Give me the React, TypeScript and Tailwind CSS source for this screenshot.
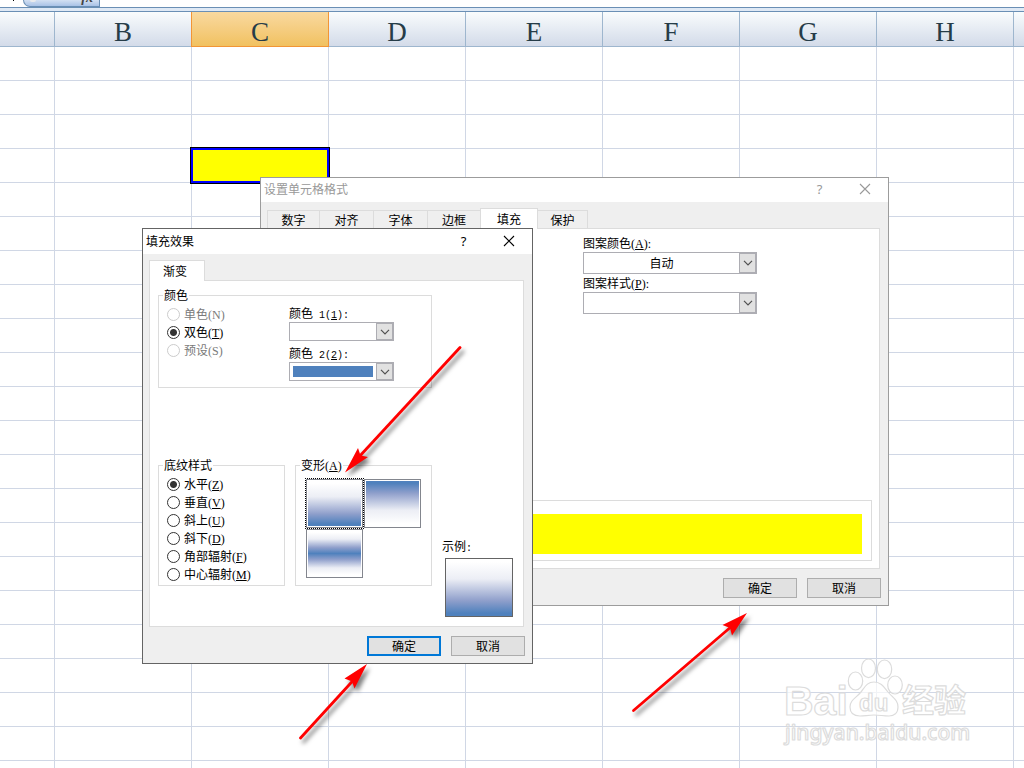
import type { ReactNode } from "react";

const columns = ["B", "C", "D", "E", "F", "G", "H"];
const rows = Array.from({ length: 22 }, (_, i) => i + 1);

function Key({ k, colon, plain }: { k: string; colon?: boolean; plain?: boolean }) {
  const isDigit = /\d/.test(k);
  return (
    <span
      className={isDigit ? "font-['Liberation_Mono',monospace] text-[10px]" : "font-['Liberation_Serif',serif] text-[12px]"}
    >
      (<span className={plain ? "" : "underline underline-offset-1"}>{k}</span>){colon ? ":" : ""}
    </span>
  );
}

function Chevron() {
  return (
    <svg viewBox="0 0 10 6" className="h-1.5 w-2.5" fill="none" stroke="#505050" strokeWidth="1.2">
      <path d="M1 .8 5 4.8 9 .8" />
    </svg>
  );
}

function Combo({
  id,
  options,
  small,
  swatch,
}: {
  id: string;
  options: string[];
  small?: boolean;
  swatch?: boolean;
}) {
  return (
    <div
      className={`relative flex border border-[#adadb3] bg-white ${small ? "h-[19px] w-[105px]" : "h-[22px] w-[174px]"}`}
    >
      <div className={`flex min-w-0 flex-1 ${swatch ? "p-[3px]" : ""}`}>
        <select
          id={id}
          className={`w-full appearance-none text-center text-[12px] leading-4 [text-align-last:center] ${swatch ? "bg-[#4f81bd]" : "bg-white"}`}
        >
          {options.map((o) => (
            <option key={o}>{o}</option>
          ))}
        </select>
      </div>
      <span className="pointer-events-none flex w-[17px] items-center justify-center border border-[#adadb3] bg-[#e1e1e1]">
        <Chevron />
      </span>
    </div>
  );
}

function Radio({
  name,
  label,
  k,
  checked,
  disabled,
}: {
  name: string;
  label: string;
  k: string;
  checked?: boolean;
  disabled?: boolean;
}) {
  return (
    <label className={`flex h-[18px] items-center gap-1 leading-4 whitespace-nowrap ${disabled ? "text-[#7a7a7a]" : "text-black"}`}>
      <input
        type="radio"
        name={name}
        defaultChecked={checked}
        disabled={disabled}
        className="size-[13px] shrink-0 appearance-none rounded-full border border-[#333] bg-white checked:bg-[radial-gradient(circle,#333_0_3px,#fff_4px)] disabled:border-[#ccc]"
      />
      <span>
        {label}
        <Key k={k} plain={disabled} />
      </span>
    </label>
  );
}

function TitleBar({ title, dim }: { title: string; dim?: boolean }) {
  return (
    <div
      className={`flex items-center bg-white pb-0.5 pl-[3px] ${dim ? "h-6 text-[#999]" : "h-[25px] text-black"}`}
    >
      <h2 className="flex-1 text-[12px] leading-4">{title}</h2>
      <button aria-label="帮助" className="w-[45px] font-['Noto_Sans',sans-serif] text-[13px] leading-4">
        ?
      </button>
      <button aria-label="关闭" className="flex w-[46px] justify-center">
        <svg viewBox="0 0 12 12" className="size-3" stroke="currentColor" strokeWidth="1.1">
          <path d="M1 1 11 11M11 1 1 11" />
        </svg>
      </button>
    </div>
  );
}

function PushButton({ children, primary }: { children: ReactNode; primary?: boolean }) {
  return (
    <button
      className={`flex h-5 w-[74px] items-center justify-center bg-[#e1e1e1] leading-4 ${primary ? "border-2 border-[#0078d7]" : "border border-[#adadad]"}`}
    >
      {children}
    </button>
  );
}

const formatTabs = [
  { label: "数字", look: "h-[18px] w-[53px] border border-b-0" },
  { label: "对齐", look: "h-[18px] w-[54px] border-t border-r" },
  { label: "字体", look: "h-[18px] w-[54px] border-t border-r" },
  { label: "边框", look: "h-[18px] w-[52px] border-t" },
  { label: "填充", look: "relative -mb-px h-[21px] w-[58px] border border-b-0 bg-white", active: true },
  { label: "保护", look: "h-[18px] w-[50px] border-t border-r" },
];

function FormatDialog() {
  return (
    <section className="absolute top-[177px] left-[260px] flex h-[429px] w-[629px] flex-col border border-[#9c9c9c] bg-[#efefef]">
      <TitleBar title="设置单元格格式" dim />
      <div role="tablist" className="flex items-end pt-[6px] pl-1.5">
        {formatTabs.map((t) => (
          <button
            key={t.label}
            role="tab"
            aria-selected={!!t.active}
            className={`border-[#dcdcdc] leading-4 ${t.look}`}
          >
            {t.label}
          </button>
        ))}
      </div>
      <div className="mr-2 ml-1.5 flex flex-1 flex-col justify-between border border-[#dcdcdc] bg-white px-[7px] pb-[7px]">
        <div className="flex flex-col pt-[5px] pl-[308px]">
          <label htmlFor="pattern-color" className="h-[18px] leading-[18px]">
            图案颜色
            <Key k="A" colon />
          </label>
          <Combo id="pattern-color" options={["自动"]} />
          <label htmlFor="pattern-style" className="h-[18px] leading-[18px]">
            图案样式
            <Key k="P" colon />
          </label>
          <Combo id="pattern-style" options={[""]} />
        </div>
        <div className="border border-[#dcdcdc] px-[9px] pt-[13px] pb-1.5">
          <div className="h-10 bg-[#ff0]" />
        </div>
      </div>
      <div className="flex justify-end gap-2.5 px-[7px] pt-[9px] pb-[7px]">
        <PushButton>确定</PushButton>
        <PushButton>取消</PushButton>
      </div>
    </section>
  );
}

const tile = "h-[49px] w-[57px] border border-[#83868e] bg-white p-px";

function FillEffectsDialog() {
  return (
    <section className="absolute top-[228px] left-[142px] flex h-[436px] w-[391px] flex-col border border-[#646464] bg-[#efefef]">
      <TitleBar title="填充效果" />
      <div role="tablist" className="flex pt-1.5 pl-1.5">
        <button
          role="tab"
          aria-selected="true"
          className="relative -mb-px h-[21px] w-14 border border-b-0 border-[#dcdcdc] bg-white pr-1 leading-4"
        >
          渐变
        </button>
      </div>
      <div className="mr-2 ml-1.5 flex-1 border border-[#dcdcdc] bg-white px-2 pt-1.5">
        <fieldset className="h-[101px] w-[274px] border border-[#dcdcdc] pl-2">
          <legend className="-ml-1 h-4 bg-white px-px leading-4">颜色</legend>
          <div className="flex">
            <div className="w-[122px] pt-0.5">
              <Radio name="mode" label="单色" k="N" disabled />
              <Radio name="mode" label="双色" k="T" checked />
              <Radio name="mode" label="预设" k="S" disabled />
            </div>
            <div className="flex flex-col gap-[3px] pt-px">
              <div>
                <label htmlFor="color-1" className="block h-[18px] leading-[18px]">
                  颜色<span className="font-['Liberation_Mono',monospace] text-[10px]"> 1</span>
                  <Key k="1" colon />
                </label>
                <Combo id="color-1" options={[""]} small />
              </div>
              <div>
                <label htmlFor="color-2" className="block h-[18px] leading-[18px]">
                  颜色<span className="font-['Liberation_Mono',monospace] text-[10px]"> 2</span>
                  <Key k="2" colon />
                </label>
                <Combo id="color-2" options={[""]} small swatch />
              </div>
            </div>
          </div>
        </fieldset>
        <div className="mt-[69px] flex">
          <fieldset className="h-[129px] w-[127px] border border-[#dcdcdc] pl-2">
            <legend className="-ml-1 h-4 bg-white px-px leading-4">底纹样式</legend>
            <div className="pt-0.5">
              <Radio name="shade" label="水平" k="Z" checked />
              <Radio name="shade" label="垂直" k="V" />
              <Radio name="shade" label="斜上" k="U" />
              <Radio name="shade" label="斜下" k="D" />
              <Radio name="shade" label="角部辐射" k="F" />
              <Radio name="shade" label="中心辐射" k="M" />
            </div>
          </fieldset>
          <fieldset className="ml-2.5 h-[129px] w-[137px] border border-[#dcdcdc] pl-2.5">
            <legend className="-ml-1.5 h-4 bg-white px-px leading-4">
              变形
              <Key k="A" />
            </legend>
            <div className="grid grid-cols-[57px_57px] gap-px pt-1.5">
              <button aria-label="变形 1" className={`${tile} outline-1 outline-black outline-dotted`}>
                <div className="h-full bg-[linear-gradient(#fff_5%,#eceef5_35%,#8f9fcb_73%,#4f81bd_95%)]" />
              </button>
              <button aria-label="变形 2" className={tile}>
                <div className="h-full bg-[linear-gradient(#4f81bd_5%,#8f9fcb_27%,#eceef5_65%,#fff_95%)]" />
              </button>
              <button aria-label="变形 3" className={tile}>
                <div className="h-full bg-[linear-gradient(#fff_3%,#eceef5_18%,#8f9fcb_37%,#4f81bd_50%,#8f9fcb_63%,#eceef5_82%,#fff_97%)]" />
              </button>
            </div>
          </fieldset>
          <div className="pt-[81px] pl-2.5">
            <p className="h-5 leading-4">
              示例<span className="font-['Liberation_Mono',monospace] text-[10px]">:</span>
            </p>
            <div className="ml-[3px] h-[59px] w-[68px] border border-[#646464] bg-[linear-gradient(#fff_5%,#eceef5_35%,#8f9fcb_73%,#4f81bd_95%)]" />
          </div>
        </div>
      </div>
      <div className="flex justify-end gap-2.5 px-[7px] pt-[9px] pb-[7px]">
        <PushButton primary>确定</PushButton>
        <PushButton>取消</PushButton>
      </div>
    </section>
  );
}

function Watermark() {
  return (
    <svg
      viewBox="0 0 200 100"
      className="pointer-events-none absolute top-[650px] left-[780px] h-[100px] w-[200px]"
      fill="#fff"
      fillOpacity=".7"
      stroke="#dcdcdc"
      strokeWidth="1.2"
      strokeLinejoin="round"
    >
      <text x="4" y="65" fontFamily="Liberation Sans, sans-serif" fontWeight="700" fontSize="41">
        Bai
      </text>
      <ellipse cx="75.500" cy="31" rx="7.200" ry="9" />
      <ellipse cx="88.500" cy="18.300" rx="7" ry="9.300" />
      <ellipse cx="104.500" cy="19.300" rx="7.200" ry="9.300" />
      <ellipse cx="115" cy="35" rx="7.300" ry="9" />
      <path d="M94 32c7 0 10 5 14 10 5 6 10 8 10 15 0 6-4 9-9 9-6 0-9-1-15-1s-9 1-14 1c-6 0-10-3-10-9 0-7 6-9 11-15 4-5 6-10 13-10Z" />
      <text x="79" y="61" fontFamily="Liberation Sans, sans-serif" fontWeight="700" fontSize="24">
        du
      </text>
      <text x="122" y="62" fontFamily="Noto Sans CJK SC, sans-serif" fontWeight="700" fontSize="32">
        经验
      </text>
      <text x="5" y="90" fontFamily="Noto Sans, sans-serif" fontWeight="500" fontSize="21">
        jingyan.baidu.com
      </text>
    </svg>
  );
}

function Arrows() {
  return (
    <svg
      viewBox="0 0 1024 768"
      className="pointer-events-none absolute top-0 left-0 h-[768px] w-[1024px] drop-shadow-[3px_4px_2px_rgba(0,0,0,0.5)]"
      fill="#f00"
      stroke="#f00"
      strokeLinecap="round"
    >
      <path d="M460 347.500 358 458" strokeWidth="2.800" />
      <path d="M345 472.500 358 448 360.500 455.500 368 457Z" stroke="none" />
      <path d="M633.500 710.500 732 626" strokeWidth="2.800" />
      <path d="M747 613 722.500 625 730 628 732 635.500Z" stroke="none" />
      <path d="M300.500 738 354 679.500" strokeWidth="2.800" />
      <path d="M367 664 344.500 678.500 352 681.500 354.500 688.500Z" stroke="none" />
    </svg>
  );
}

export default function App() {
  return (
    <main className="relative h-screen w-full overflow-hidden bg-white font-['Noto_Sans_CJK_SC',sans-serif] text-[12px] text-black">
      <div className="flex h-2 items-start overflow-hidden border-b border-[#6a8fb5] bg-white pl-[13px]">
        <span className="size-px bg-black" />
        <div className="ml-[9px] flex h-[7px] w-[77px] items-end justify-between rounded-bl-[8px] border-r border-b border-l border-[#6a8fb5] bg-linear-to-b from-[#d3e0f2] to-[#a9c2e6] pr-1.5 pl-1.5">
          <span className="mb-1 h-1 w-1.5 rounded-full bg-[#e9eaec]" />
          <span className="mb-0.5 font-['Liberation_Serif',serif] text-[14px] leading-3 font-bold text-[#444] italic">
            fx
          </span>
        </div>
      </div>
      <div className="h-1 border-b border-[#6a8fb5] bg-[#dfe9f5]" />
      <table className="w-full table-fixed border-separate border-spacing-0">
        <colgroup>
          <col className="w-[55px]" />
          {columns.map((c) => (
            <col key={c} className="w-[137px]" />
          ))}
          <col />
        </colgroup>
        <thead>
          <tr>
            <th className="h-[35px] border-r border-b border-[#9eb6ce] bg-linear-to-b from-[#f9fcfd] to-[#d3dbe9] p-0" />
            {columns.map((c) => (
              <th
                key={c}
                scope="col"
                className={`relative h-[35px] border-r border-b p-0 pt-1.5 text-center font-['Liberation_Serif',serif] text-[27px] leading-7 font-normal text-[#263c48] ${c === "C" ? "border-[#f29536] bg-linear-to-b from-[#f9d99f] to-[#f1c15f] shadow-[-1px_0_0_#f29536]" : "border-[#9eb6ce] bg-linear-to-b from-[#f9fcfd] to-[#d3dbe9]"}`}
              >
                {c}
              </th>
            ))}
            <th className="h-[35px] border-b border-[#9eb6ce] bg-linear-to-b from-[#f9fcfd] to-[#d3dbe9] p-0" />
          </tr>
        </thead>
        <tbody>
          {rows.map((r) => (
            <tr key={r}>
              <td className="h-[34px] border-r border-b border-[#d0d7e5] p-0" />
              {columns.map((c) => (
                <td key={c} className="relative h-[34px] border-r border-b border-[#d0d7e5] p-0">
                  {r === 4 && c === "C" && (
                    <div className="absolute -inset-0.5 z-10 border border-black bg-[#ff0] inset-ring-2 inset-ring-[#00f]" />
                  )}
                </td>
              ))}
              <td className="h-[34px] border-b border-[#d0d7e5] p-0" />
            </tr>
          ))}
        </tbody>
      </table>
      <div className="absolute inset-0 z-20">
        <FormatDialog />
        <FillEffectsDialog />
        <Watermark />
        <Arrows />
      </div>
    </main>
  );
}
